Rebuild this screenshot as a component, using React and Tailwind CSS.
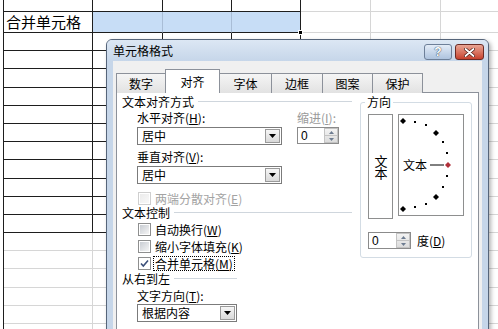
import React from 'react';

const rowHeights = [
  'h-[12px]', 'h-[21px]', 'h-[18px]', 'h-[18px]', 'h-[19px]', 'h-[18px]', 'h-[18px]',
  'h-[18px]', 'h-[18px]', 'h-[19px]', 'h-[18px]', 'h-[18px]', 'h-[18px]', 'h-[18px]',
  'h-[18px]', 'h-[19px]', 'h-[18px]', 'h-[18px]', 'h-[18px]',
];
const colWidths = ['w-[4px]', 'w-[89px]', 'w-[70px]', 'w-[69px]', 'w-[69px]', 'w-[70px]', 'w-[70px]', 'w-[70px]'];

const cellClass = (r, c) => {
  if (c === 0) return 'border-r border-[#1e1e1e]';
  if (r === 1 && (c === 2 || c === 3)) return 'border-r border-b border-[#1e1e1e] border-r-[#a9bdd6] bg-[#c7ddf6]';
  if (r === 1 && c === 4) return 'border-r border-b border-[#1e1e1e] bg-[#c7ddf6]';
  if (r <= 12 && c <= 4) return 'border-r border-b border-[#1e1e1e]';
  return 'border-r border-b border-[#d6d6d6]';
};

const Sheet = () => (
  <div className="flex flex-col">
    {rowHeights.map((h, r) => (
      <div key={r} className={`flex shrink-0 ${h}`}>
        {colWidths.map((w, c) => (
          <div key={c} className={`shrink-0 ${w} ${cellClass(r, c)}`}>
            {r === 1 && c === 1 && (
              <span className="block pl-[2px] text-[15px] leading-[20px] text-black">合并单元格</span>
            )}
          </div>
        ))}
      </div>
    ))}
  </div>
);

const Key = ({ k }) => (
  <>(<span className="underline">{k}</span>)</>
);

const DropBtn = () => (
  <div className="w-[15px] h-[14px] mr-[1px] border border-[#9a9a9a] bg-gradient-to-b from-[#f6f6f6] to-[#d9d9d9] flex items-center justify-center">
    <svg width="7" height="4" viewBox="0 0 7 4">
      <path d="M0 0h7L3.5 4z" fill="#000" />
    </svg>
  </div>
);

const Combo = ({ value, w, className = '' }) => (
  <div className={`flex items-center border border-[#7b7b7b] bg-white h-[18px] ${w} ${className}`}>
    <span className="pl-[4px] flex-1 text-[12px] leading-none">{value}</span>
    <DropBtn />
  </div>
);

const Spin = ({ w }) => (
  <div className={`flex items-center border border-[#8b8b8b] bg-white h-[17px] ${w}`}>
    <span className="pl-[3px] flex-1 text-[12px] leading-none font-['Liberation_Sans',sans-serif]">0</span>
    <div className="w-[14px] h-[15px] flex flex-col border border-[#c3c3c3] bg-gradient-to-b from-[#f3f3f3] to-[#dcdcdc]">
      <div className="flex-1 flex items-center justify-center border-b border-[#c3c3c3]">
        <svg width="5" height="3" viewBox="0 0 5 3"><path d="M0 3h5L2.5 0z" fill="#6d7c91" /></svg>
      </div>
      <div className="flex-1 flex items-center justify-center">
        <svg width="5" height="3" viewBox="0 0 5 3"><path d="M0 0h5L2.5 3z" fill="#6d7c91" /></svg>
      </div>
    </div>
  </div>
);

const Check = ({ checked, disabled }) => (
  <span
    className={`w-[13px] h-[13px] shrink-0 border bg-white flex items-center justify-center ${
      disabled ? 'border-[#cfcfcf]' : 'border-[#8e8f8f]'
    }`}
  >
    {checked ? (
      <svg width="9" height="9" viewBox="0 0 9 9">
        <path d="M1 4.5l2.3 2.5L8 1.5" stroke="#3b4f7a" strokeWidth="1.6" fill="none" />
      </svg>
    ) : (
      <span
        className={`w-[9px] h-[9px] bg-gradient-to-br ${
          disabled ? 'from-[#ebebeb] to-[#f8f8f8]' : 'from-[#c9cdd3] to-[#f5f5f5]'
        }`}
      />
    )}
  </span>
);

const Header = ({ title, className = '' }) => (
  <div className={`flex items-center ${className}`}>
    <span className="text-[12px] leading-none">{title}</span>
    <span className="ml-[4px] flex-1 h-[2px] border-t border-[#cfd6dd] border-b border-b-white" />
  </div>
);

const CheckRow = ({ label, k, checked, disabled, focus }) => (
  <div className="flex items-center h-[17px] pl-[16px]">
    <Check checked={checked} disabled={disabled} />
    <span
      className={`ml-[2px] px-[1px] text-[12px] leading-[13px] ${disabled ? 'text-[#a3a3a3]' : 'text-black'} ${
        focus ? 'border border-dotted border-black' : 'border border-transparent'
      }`}
    >
      {label}
      <Key k={k} />
    </span>
  </div>
);

const OrientationDial = () => (
  <svg width="64" height="100" viewBox="0 0 64 100">
    <text x="4" y="55" fontSize="12" fill="#000" fontFamily="Noto Sans CJK SC, sans-serif">文本</text>
    <line x1="31" y1="50" x2="45" y2="50" stroke="#000" strokeWidth="1" />
    {[[4, 6], [37, 18], [37, 82], [4, 94]].map(([x, y], i) => (
      <path key={i} d={`M${x} ${y - 3}L${x + 3} ${y}L${x} ${y + 3}L${x - 3} ${y}z`} fill="#000" />
    ))}
    <path d="M49 47L52 50L49 53L46 50z" fill="#b0303a" />
    {[[16, 7], [27, 10], [44, 27], [48, 38], [48, 61], [44, 72], [27, 89], [16, 92]].map(([x, y], i) => (
      <rect key={i} x={x - 1} y={y - 1} width="2" height="2" fill="#000" />
    ))}
  </svg>
);

const tabs = [
  { label: '数字', w: 'w-[50px]' },
  { label: '对齐', w: 'w-[55px]', active: true },
  { label: '字体', w: 'w-[52px]' },
  { label: '边框', w: 'w-[51px]' },
  { label: '图案', w: 'w-[50px]' },
  { label: '保护', w: 'w-[50px]' },
];

const Dialog = () => (
  <div className="absolute left-[106px] top-[39px] w-[383px] h-[300px] flex flex-col rounded-t-[6px] border border-[#56657a] bg-[#c6d6e9] shadow-[2px_2px_4px_rgba(0,0,0,0.3)]">
    {/* title bar */}
    <div className="h-[21px] shrink-0 flex items-center pl-[6px] pr-[4px] rounded-t-[5px] bg-gradient-to-b from-[#dce7f4] to-[#c6d6e9]">
      <span className="text-[12px] leading-none text-black">单元格格式</span>
      <div className="ml-auto mt-[3px] flex gap-[3px]">
        <div className="w-[28px] h-[16px] rounded-[3px] border border-[#6d7f98] bg-gradient-to-b from-[#e3ecf7] to-[#aec3de] flex items-center justify-center">
          <span className="text-[12px] leading-none font-bold text-white font-['Liberation_Sans',sans-serif] [text-shadow:0_0_1px_#2d3e57,0_0_1px_#2d3e57]">?</span>
        </div>
        <div className="w-[29px] h-[16px] rounded-[3px] border border-[#6b2b25] bg-gradient-to-b from-[#e8a595] to-[#c6402d] flex items-center justify-center">
          <svg width="11" height="9" viewBox="0 0 11 9">
            <path d="M1.5 1l8 7M9.5 1l-8 7" stroke="#4a1a14" strokeWidth="3.2" strokeLinecap="round" />
            <path d="M1.5 1l8 7M9.5 1l-8 7" stroke="#fff" strokeWidth="1.8" strokeLinecap="round" />
          </svg>
        </div>
      </div>
    </div>

    {/* client area */}
    <div className="flex-1 mx-[6px] bg-[#f0f0f0] px-[3px] pt-[8px]">
      <div className="flex items-end h-[24px]">
        {tabs.map((t) =>
          t.active ? (
            <div
              key={t.label}
              className={`relative z-10 -ml-[1px] h-[24px] ${t.w} border-l border-r border-t border-[#8c919a] bg-white flex items-center justify-center text-[12px] leading-none`}
            >
              {t.label}
            </div>
          ) : (
            <div
              key={t.label}
              className={`h-[20px] ${t.w} border-t border-r border-[#8c919a] first:border-l bg-gradient-to-b from-[#f5f5f5] to-[#e2e2e2] flex items-center justify-center text-[12px] leading-none`}
            >
              {t.label}
            </div>
          )
        )}
      </div>

      <div className="-mt-[1px] h-[240px] border border-[#8c919a] bg-white flex pl-[5px]">
        {/* left column */}
        <div className="w-[230px] flex flex-col">
          <Header title="文本对齐方式" className="h-[17px]" />
          <div className="flex pl-[15px]">
            <div className="w-[145px] flex flex-col">
              <div className="h-[15px] flex items-center text-[12px] leading-none">
                水平对齐<Key k="H" />:
              </div>
              <Combo value="居中" w="w-[145px]" className="mt-[2px]" />
              <div className="mt-[5px] h-[14px] flex items-center text-[12px] leading-none">
                垂直对齐<Key k="V" />:
              </div>
              <Combo value="居中" w="w-[145px]" className="mt-[2px]" />
            </div>
            <div className="ml-[15px] flex flex-col">
              <div className="h-[15px] flex items-center text-[12px] leading-none text-[#9a9a9a]">
                缩进<Key k="I" />:
              </div>
              <div className="mt-[2px]">
                <Spin w="w-[42px]" />
              </div>
            </div>
          </div>
          <div className="mt-[6px]">
            <CheckRow label="两端分散对齐" k="E" disabled />
          </div>
          <Header title="文本控制" className="h-[14px] -mt-[1px]" />
          <div className="mt-[1px]">
            <CheckRow label="自动换行" k="W" />
            <CheckRow label="缩小字体填充" k="K" />
            <CheckRow label="合并单元格" k="M" checked focus />
          </div>
          <Header title="从右到左" className="h-[14px] w-[115px]" />
          <div className="mt-[3px] pl-[15px] h-[14px] flex items-center text-[12px] leading-none">
            文字方向<Key k="T" />:
          </div>
          <div className="mt-[1px] pl-[15px]">
            <Combo value="根据内容" w="w-[100px]" />
          </div>
        </div>

        {/* orientation group */}
        <fieldset className="ml-[8px] mt-[2px] self-start w-[112px] rounded-[3px] border border-[#d3dce4] pl-[7px] pb-[8px]">
          <legend className="ml-[-3px] px-[2px] text-[12px] leading-[14px]">方向</legend>
          <div className="mt-[5px] flex">
            <div className="w-[25px] h-[105px] border border-[#8e8f8f] flex items-center justify-center">
              <span className="[writing-mode:vertical-rl] [text-orientation:upright] text-[13px] leading-[14px] tracking-[-1px]">
                文本
              </span>
            </div>
            <div className="ml-[5px] w-[66px] h-[102px] border border-[#8e8f8f]">
              <OrientationDial />
            </div>
          </div>
          <div className="mt-[13px] flex items-center">
            <Spin w="w-[43px]" />
            <span className="ml-[6px] text-[12px] leading-none">
              度<Key k="D" />
            </span>
          </div>
        </fieldset>
      </div>
    </div>
  </div>
);

export default function App() {
  return (
    <div className="relative w-[498px] h-[329px] overflow-hidden bg-white text-black font-['Noto_Sans_CJK_SC','Noto_Sans',sans-serif]">
      <Sheet />
      <div className="absolute left-[298px] top-[30px] w-[5px] h-[5px] bg-black border border-white" />
      <Dialog />
    </div>
  );
}
